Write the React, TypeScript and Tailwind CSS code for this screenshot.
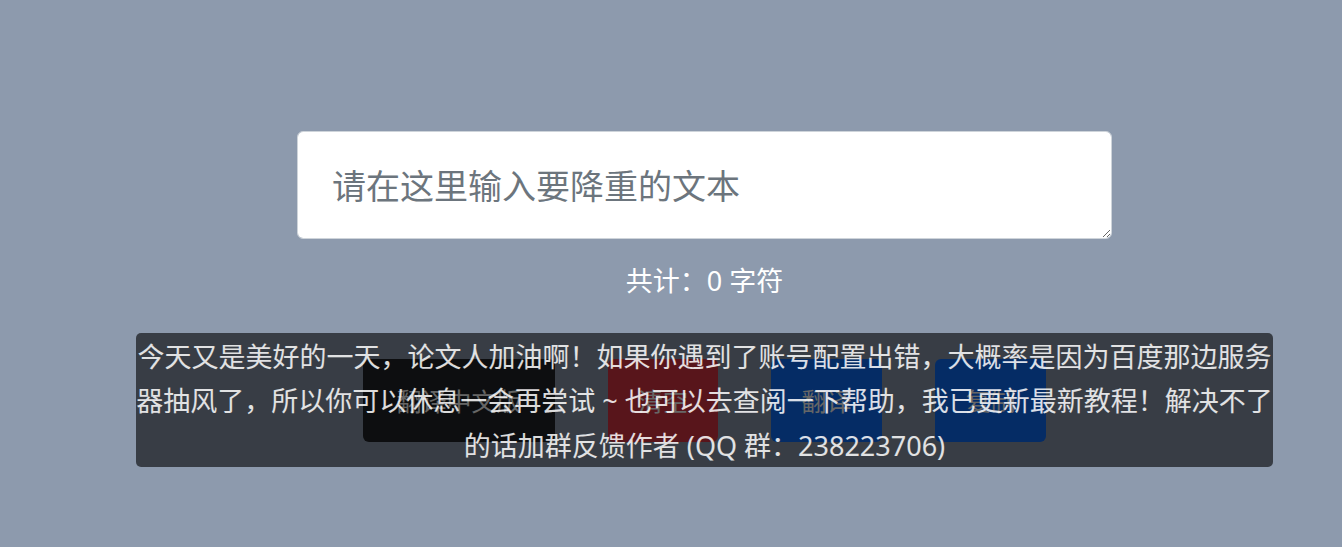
import React, { useState } from 'react'

const FONT = "font-['Noto_Sans','Noto_Sans_CJK_SC',sans-serif]"

export default function App() {
  const [text, setText] = useState('')

  return (
    <div className={`relative min-h-[547px] w-full bg-[#8d9aad] ${FONT}`}>
      <main className="flex flex-col items-center pl-[67px] pt-[131px]">
        {/* input */}
        <textarea
          value={text}
          onChange={e => setText(e.target.value)}
          placeholder="请在这里输入要降重的文本"
          className="h-[108px] w-[815px] resize rounded-[6px] border border-[#ced4da] bg-white pl-[34px] pr-[35px] py-[36px] text-[34px] leading-[36px] text-[#212529] outline-none placeholder:text-[#6c757d]"
        />

        <p className="mt-[24px] h-[36px] text-[27px] leading-[36px] text-white">
          共计：{text.length} 字符
        </p>

        {/* action buttons */}
        <div className="mt-[60px] flex gap-[53px]">
          <button className="h-[83px] w-[192px] rounded-[6px] bg-[#212529] pt-[3px] text-[25px] text-white">翻译中文版</button>
          <button className="h-[83px] w-[110px] rounded-[6px] bg-[#dc3545] pt-[3px] text-[25px] text-white">清空</button>
          <button className="h-[83px] w-[111px] rounded-[6px] bg-[#0d6efd] pt-[3px] text-[25px] text-white">翻译</button>
          <button className="h-[83px] w-[111px] rounded-[6px] bg-[#0d6efd] pt-[3px] text-[25px] text-white">复制</button>
        </div>
      </main>

      {/* toast notice */}
      <div className="absolute left-[136px] top-[333px] flex h-[134px] w-[1137px] items-center justify-center rounded-[5px] bg-black/60 pt-[3px]">
        <p className="text-center text-[27px] leading-[44.6px] text-white/85">
          今天又是美好的一天，论文人加油啊！如果你遇到了账号配置出错，大概率是因为百度那边服务器抽风了，所以你可以休息一会再尝试 ~ 也可以去查阅一下帮助，我已更新最新教程！解决不了的话加群反馈作者 (QQ 群：238223706)
        </p>
      </div>
    </div>
  )
}
